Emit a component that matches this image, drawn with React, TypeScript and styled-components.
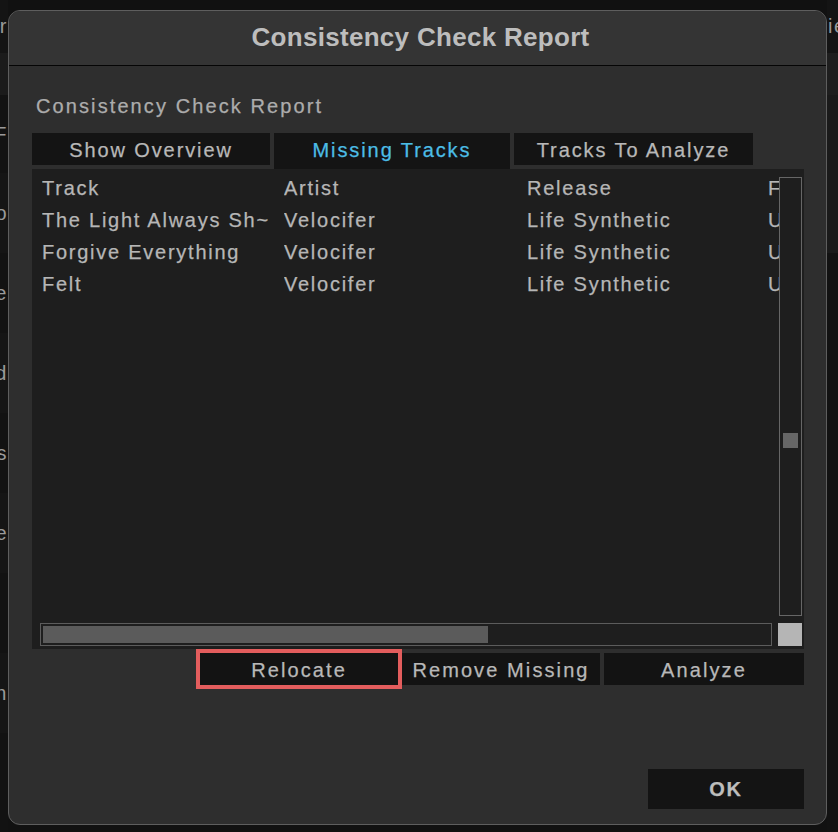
import React from "react";
import styled, { createGlobalStyle } from "styled-components";

const GlobalStyle = createGlobalStyle`
  html, body {
    margin: 0;
    padding: 0;
    background: #111111;
  }
  body {
    font-family: "Liberation Sans", Arial, sans-serif;
    -webkit-font-smoothing: antialiased;
  }
`;

type Band = { h: number; shade: string; text?: string };

const leftBands: Band[] = [
  { h: 53, shade: "#141414", text: "Year" },
  { h: 42, shade: "#1b1b1b" },
  { h: 78, shade: "#121212", text: "BPM F" },
  { h: 80, shade: "#151515", text: "Info" },
  { h: 80, shade: "#121212", text: "Use" },
  { h: 80, shade: "#151515", text: "Bpmd" },
  { h: 80, shade: "#121212", text: "Keys" },
  { h: 80, shade: "#151515", text: "Time" },
  { h: 80, shade: "#121212" },
  { h: 80, shade: "#151515", text: "Min" },
  { h: 99, shade: "#121212" },
];

const rightBands: Band[] = [
  { h: 53, shade: "#141414", text: "ie" },
  { h: 42, shade: "#1e1e1e" },
  { h: 158, shade: "#1a1a1a" },
  { h: 579, shade: "#121212" },
];

const columns = ["Track", "Artist", "Release", "Format"];

const rows = [
  ["The Light Always Sh~", "Velocifer", "Life Synthetic", "Unknown"],
  ["Forgive Everything", "Velocifer", "Life Synthetic", "Unknown"],
  ["Felt", "Velocifer", "Life Synthetic", "Unknown"],
];

const Page = styled.div`
  width: 838px;
  height: 832px;
  display: flex;
  overflow: hidden;
  background: #111111;
`;

const Edge = styled.div<{ $side: "left" | "right" }>`
  width: ${(p) => (p.$side === "left" ? 8 : 11)}px;
  flex: none;
  display: flex;
  flex-direction: column;
  overflow: hidden;
`;

const EdgeBand = styled.div<{ $h: number; $shade: string; $side: "left" | "right" }>`
  height: ${(p) => p.$h}px;
  width: 100%;
  flex: none;
  background: ${(p) => p.$shade};
  display: flex;
  align-items: center;
  justify-content: ${(p) => (p.$side === "left" ? "flex-end" : "flex-start")};
  padding-left: ${(p) => (p.$side === "right" ? 1 : 0)}px;
  box-sizing: border-box;
  color: #9a9a9a;
  font-size: 20px;
  white-space: nowrap;
  overflow: hidden;
  letter-spacing: 1.5px;
`;

const Dialog = styled.div`
  margin-top: 10px;
  width: 819px;
  height: 815px;
  flex: none;
  box-sizing: border-box;
  border: 1px solid #5e5e5e;
  border-radius: 12px;
  overflow: hidden;
  display: flex;
  flex-direction: column;
  background: #2e2e2e;
`;

const TitleBar = styled.div`
  height: 55px;
  flex: none;
  background: #343434;
  border-bottom: 1px solid #050505;
  display: flex;
  align-items: center;
  justify-content: center;
  padding-left: 6px;
  padding-bottom: 2px;
  box-sizing: border-box;
`;

const Title = styled.h1`
  margin: 0;
  font-family: "Liberation Sans", Arial, sans-serif;
  font-weight: 700;
  font-size: 26px;
  letter-spacing: 0.3px;
  color: #bdbdbd;
`;

const Body = styled.div`
  flex: 1;
  display: flex;
  flex-direction: column;
  padding: 0 22px 15px 23px;
  font-size: 20px;
  color: #b6b6b6;
  -webkit-text-stroke: 0.25px currentColor;
`;

const Subtitle = styled.div`
  margin-top: 29px;
  margin-left: 4px;
  height: 22px;
  line-height: 22px;
  letter-spacing: 2.1px;
  color: #acacac;
`;

const Tabs = styled.div`
  margin-top: 16px;
  display: flex;
  align-items: flex-start;
  gap: 4px;
`;

const Tab = styled.div<{ $active?: boolean; $w: number }>`
  width: ${(p) => p.$w}px;
  height: ${(p) => (p.$active ? 36 : 32)}px;
  padding-top: 2px;
  padding-bottom: ${(p) => (p.$active ? 4 : 0)}px;
  box-sizing: border-box;
  background: #141414;
  display: flex;
  align-items: center;
  justify-content: center;
  letter-spacing: 1.9px;
  color: ${(p) => (p.$active ? "#4cbde6" : "#b8b8b8")};
`;

const Table = styled.div`
  height: 480px;
  background: #1e1e1e;
  display: grid;
  grid-template-columns: 1fr 23px;
  grid-template-rows: 1fr 23px;
  row-gap: 7px;
  padding: 0 2px 3px 0;
  box-sizing: border-box;
`;

const List = styled.div`
  overflow: hidden;
  padding-top: 3px;
`;

const Row = styled.div`
  display: grid;
  grid-template-columns: 242px 243px 241px 1fr;
  height: 32px;
  align-items: center;
  padding-left: 10px;
  letter-spacing: 1.75px;
  white-space: nowrap;
`;

const Cell = styled.div`
  overflow: hidden;
`;

const VScroll = styled.div`
  margin-top: 8px;
  border: 1px solid #666666;
  background: #1e1e1e;
  box-sizing: border-box;
  padding: 0 3px;
`;

const VThumb = styled.div<{ $top: number }>`
  margin-top: ${(p) => p.$top}px;
  height: 15px;
  background: #666666;
`;

const HScroll = styled.div`
  margin: 0 7px 0 8px;
  border: 1px solid #5c5c5c;
  box-sizing: border-box;
  padding: 2px;
`;

const HThumb = styled.div<{ $w: number }>`
  width: ${(p) => p.$w}px;
  height: 100%;
  background: #5b5b5b;
`;

const Corner = styled.div`
  margin-left: -1px;
  background: #b5b5b5;
`;

const ActionRow = styled.div`
  margin-top: 4px;
  display: flex;
  justify-content: flex-end;
  gap: 4px;
`;

const ActionButton = styled.button<{ $w: number; $focused?: boolean }>`
  width: ${(p) => p.$w}px;
  height: 32px;
  border: none;
  padding: 2px 0 0;
  background: #131313;
  color: #b8b8b8;
  font-family: "Liberation Sans", Arial, sans-serif;
  font-size: 20px;
  letter-spacing: 2.1px;
  -webkit-text-stroke: 0.25px currentColor;
  outline: ${(p) => (p.$focused ? "4px solid #e35d5d" : "none")};
`;

const Footer = styled.div`
  margin-top: auto;
  display: flex;
  justify-content: flex-end;
`;

const OkButton = styled.button`
  width: 156px;
  height: 40px;
  border: none;
  background: #141414;
  color: #bdbdbd;
  font-family: "Liberation Sans", Arial, sans-serif;
  font-size: 20px;
  font-weight: 700;
  letter-spacing: 1.8px;
`;

export default function App() {
  return (
    <>
      <GlobalStyle />
      <Page>
        <Edge $side="left">
          {leftBands.map((b, i) => (
            <EdgeBand key={i} $h={b.h} $shade={b.shade} $side="left">
              {b.text}
            </EdgeBand>
          ))}
        </Edge>
        <Dialog>
          <TitleBar>
            <Title>Consistency Check Report</Title>
          </TitleBar>
          <Body>
            <Subtitle>Consistency Check Report</Subtitle>
            <Tabs>
              <Tab $w={238}>Show Overview</Tab>
              <Tab $w={236} $active>
                Missing Tracks
              </Tab>
              <Tab $w={239}>Tracks To Analyze</Tab>
            </Tabs>
            <Table>
              <List>
                <Row>
                  {columns.map((c) => (
                    <Cell key={c}>{c}</Cell>
                  ))}
                </Row>
                {rows.map((r, i) => (
                  <Row key={i}>
                    {r.map((c, j) => (
                      <Cell key={j}>{c}</Cell>
                    ))}
                  </Row>
                ))}
              </List>
              <VScroll>
                <VThumb $top={255} />
              </VScroll>
              <HScroll>
                <HThumb $w={445} />
              </HScroll>
              <Corner />
            </Table>
            <ActionRow>
              <ActionButton $w={198} $focused>
                Relocate
              </ActionButton>
              <ActionButton $w={198}>Remove Missing</ActionButton>
              <ActionButton $w={200}>Analyze</ActionButton>
            </ActionRow>
            <Footer>
              <OkButton>OK</OkButton>
            </Footer>
          </Body>
        </Dialog>
        <Edge $side="right">
          {rightBands.map((b, i) => (
            <EdgeBand key={i} $h={b.h} $shade={b.shade} $side="right">
              {b.text}
            </EdgeBand>
          ))}
        </Edge>
      </Page>
    </>
  );
}
